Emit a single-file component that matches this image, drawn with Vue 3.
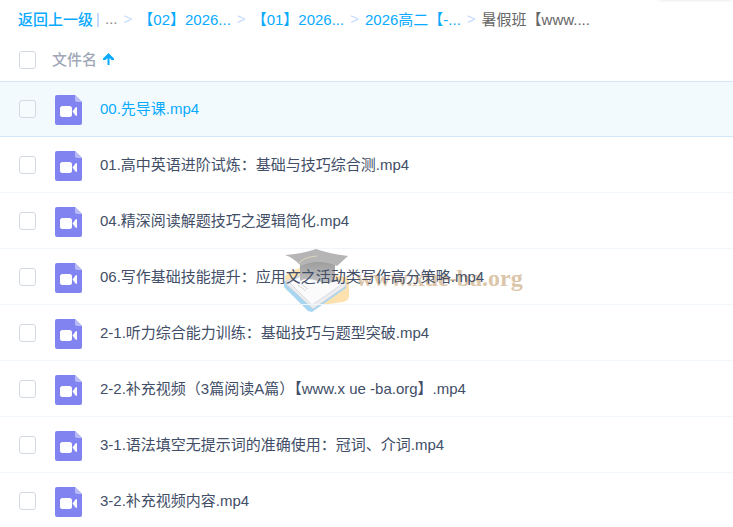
<script setup>
import { ref, computed } from 'vue'

const crumbs = [
  '【02】2026...',
  '【01】2026...',
  '2026高二【-...',
]

const files = ref([
  { id: 1, name: '00.先导课.mp4', checked: false },
  { id: 2, name: '01.高中英语进阶试炼：基础与技巧综合测.mp4', checked: false },
  { id: 3, name: '04.精深阅读解题技巧之逻辑简化.mp4', checked: false },
  { id: 4, name: '06.写作基础技能提升：应用文之活动类写作高分策略.mp4', checked: false },
  { id: 5, name: '2-1.听力综合能力训练：基础技巧与题型突破.mp4', checked: false },
  { id: 6, name: '2-2.补充视频（3篇阅读A篇）【www.x ue -ba.org】.mp4', checked: false },
  { id: 7, name: '3-1.语法填空无提示词的准确使用：冠词、介词.mp4', checked: false },
  { id: 8, name: '3-2.补充视频内容.mp4', checked: false },
])

const activeId = ref(1)

const allChecked = computed({
  get: () => files.value.every(file => file.checked),
  set: (val) => files.value.forEach(file => { file.checked = val }),
})
</script>

<template>
<div class="file-page">
  <div class="top-panel"></div>
  <nav class="crumbs">
    <a class="back" href="#">返回上一级</a>
    <span class="divider"></span>
    <span class="dots">...</span>
    <template v-for="crumb in crumbs" :key="crumb">
      <span class="arrow">&gt;</span>
      <a href="#">{{ crumb }}</a>
    </template>
    <span class="arrow">&gt;</span>
    <span class="current">暑假班【www....</span>
  </nav>

  <table class="file-table">
    <thead>
      <tr>
        <th class="check-cell"><input type="checkbox" v-model="allChecked" aria-label="全选"></th>
        <th colspan="2">
          <button class="sort">
            文件名
            <svg width="11" height="12" viewBox="0 0 11 12">
              <path d="M5.500 0L11 5.500V7H8.500L6.500 5V12H4.500V5L2.500 7H0V5.500Z" fill="#09aaff" />
            </svg>
          </button>
        </th>
      </tr>
    </thead>
    <tbody>
      <tr v-for="file in files" :key="file.id" :class="{ active: file.id === activeId }" @mouseenter="activeId = file.id">
        <td class="check-cell"><input type="checkbox" :id="'file-' + file.id" v-model="file.checked"></td>
        <td class="icon-cell">
          <svg width="27" height="30" viewBox="0 0 27 30">
            <path d="M2 0H20L27 7V28Q27 30 25 30H2Q0 30 0 28V2Q0 0 2 0Z" fill="#8183f1" />
            <path d="M20 0L27 7H22Q20 7 20 5Z" fill="#b9baf8" />
            <rect x="5" y="11" width="12" height="11" rx="2.500" fill="#fff" />
            <path d="M17.500 16.500L20.500 12.500Q22 11.500 22 13V20Q22 21.500 20.500 20.500Z" fill="#fff" />
          </svg>
        </td>
        <td class="name-cell"><label :for="'file-' + file.id">{{ file.name }}</label></td>
      </tr>
    </tbody>
  </table>

  <div class="watermark">
    <svg width="66" height="64" viewBox="0 0 66 64">
      <defs>
        <linearGradient id="cap" x1="0" y1="0" x2="0" y2="1">
          <stop offset="0" stop-color="#858586" />
          <stop offset="1" stop-color="#b4b4b6" />
        </linearGradient>
      </defs>
      <path d="M1 29Q2 26 8 23L20 18L60 29Q65 29 65 34V49Q64 53 59 54L38 57L2 42Z" fill="#fddb9c" />
      <path d="M0 33L3 34L27 57L62 37V40L28 64L24 63L0 39Z" fill="#8fcdf0" />
      <path d="M2 33L20 26L62 35V38L29 61L2 36Z" fill="#e9ebee" stroke="#c3c9cf" />
      <path d="M4 33L22 27L60 35L28 57Z" fill="#fbfbfc" stroke="#d0d4d9" />
      <path d="M14 37L22 43M17 36L24 41" fill="none" stroke="#c9ccd0" />
      <path d="M16 14V33Q22 29 34 33Q44 37 51 33V14Z" fill="url(#cap)" />
      <path d="M1 7Q18 6 32 1Q46 6 64 8L53 18Q34 10 17 18Q10 10 1 7Z" fill="#a3a3a4" />
      <path d="M33 8Q20 9 15 15" fill="none" stroke="#d6cda6" />
    </svg>
    <span>www.xue-ba.org</span>
  </div>
</div>
</template>

<style>
body {
  background: #fff;
}
</style>

<style scoped>
.file-page {
  position: relative;
  overflow: hidden;
  font-family: "Liberation Sans", "Noto Sans CJK SC", sans-serif;
  font-size: 15px;
  color: #424e67;
}
.top-panel {
  position: absolute;
  right: 0;
  top: -12px;
  width: 75px;
  height: 11px;
  border-radius: 4px;
  box-shadow: 0 0 4px #ccc;
}
.crumbs {
  display: flex;
  align-items: center;
  box-sizing: border-box;
  height: 38px;
  padding: 0 0 2px 18px;
  white-space: nowrap;
}
.crumbs a {
  color: #09aaff;
  text-decoration: none;
}
.crumbs .back {
  font-weight: 500;
}
.divider {
  width: 2px;
  height: 14px;
  margin: 4px 6px 0 4px;
  background: #c4dbfe;
}
.dots {
  color: #888;
}
.arrow {
  margin: 0 6px;
  color: #c4dbfe;
}
.current {
  color: #666;
}

.file-table {
  position: relative;
  z-index: 1;
  width: 100%;
  border-spacing: 0;
}
th, td {
  box-sizing: border-box;
  padding: 0;
  text-align: left;
}
th {
  height: 43px;
}
td {
  height: 56px;
  border-top: 1px solid transparent;
  border-bottom: 1px solid #f0f5fc;
}
.active td {
  background: #f3fafe;
  border-color: #d4e6fa;
}
.active label {
  color: #09aaff;
}
.check-cell {
  width: 52px;
}
.icon-cell {
  width: 48px;
}
.icon-cell svg {
  display: block;
  margin: 2px 0 0 3px;
}
.name-cell {
  padding-bottom: 3px;
}
input {
  appearance: none;
  display: block;
  box-sizing: border-box;
  width: 17px;
  height: 18px;
  margin: 0 0 0 19px;
  border: 1px solid #d3d9e2;
  border-radius: 3px;
  background: #fff;
}
.active input {
  background: #f6fbfe;
}
input:checked {
  background: #09aaff;
}
.sort {
  display: flex;
  align-items: center;
  gap: 6px;
  padding: 0 0 2px;
  border: 0;
  background: none;
  font: inherit;
  font-weight: 500;
  color: #a0a8b8;
}

.watermark {
  position: absolute;
  left: 284px;
  top: 248px;
  display: flex;
  align-items: center;
  gap: 6px;
  opacity: 0.8;
  pointer-events: none;
  font-family: "Liberation Serif", serif;
  font-size: 24px;
  font-weight: 700;
  color: #d4b896;
}
.watermark span {
  padding-bottom: 4px;
}
</style>
